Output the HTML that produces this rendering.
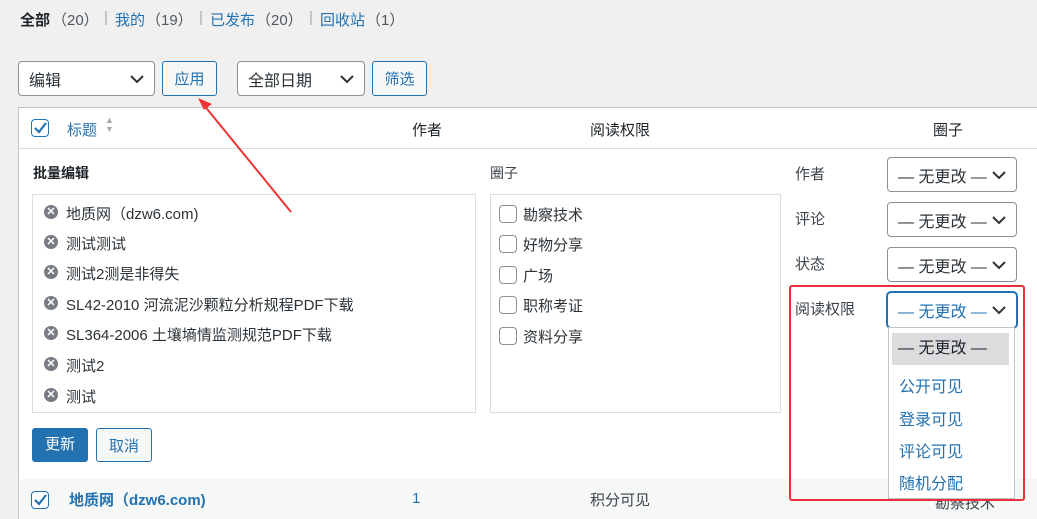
<!DOCTYPE html><html><head><meta charset="utf-8"><style>
*{box-sizing:border-box;margin:0;padding:0}
body{width:1037px;height:509px;overflow:hidden;background:#f0f0f1;font-family:"Liberation Sans","Noto Sans CJK SC",sans-serif;font-size:15px;color:#3c434a;position:relative}
.a{position:absolute;white-space:nowrap}
.link{color:#2271b1}
.sel{position:absolute;background:#fff;border:1px solid #8c8f94;border-radius:4px;color:#2c3338;font-size:16px;padding-left:10px;display:flex;align-items:center}
.sel svg{position:absolute;right:10px;top:50%;margin-top:-4px}
.btn{position:absolute;border:1px solid #2271b1;background:#f6f7f7;color:#2271b1;border-radius:3px;font-size:15px;display:flex;align-items:center;justify-content:center}
.cb{position:absolute;width:18px;height:18px;border:1px solid #8c8f94;border-radius:4px;background:#fff}
.x{position:absolute;width:14px;height:14px;border-radius:50%;background:#787c82;color:#fff;font-size:11px;line-height:14px;text-align:center;font-weight:bold}
.n{top:9px;font-size:15px;color:#50575e}
</style></head><body>
<div class="a n" style="left:20px;color:#1d2327;font-weight:bold">全部</div>
<div class="a n" style="left:52px">（20）</div>
<div class="a n" style="left:104px;color:#a7aaad">|</div>
<div class="a n link" style="left:115px;color:#2271b1">我的</div>
<div class="a n" style="left:146px">（19）</div>
<div class="a n" style="left:199px;color:#a7aaad">|</div>
<div class="a n" style="left:210px;color:#2271b1">已发布</div>
<div class="a n" style="left:256px">（20）</div>
<div class="a n" style="left:309px;color:#a7aaad">|</div>
<div class="a n" style="left:320px;color:#2271b1">回收站</div>
<div class="a n" style="left:366px">（1）</div>

<div class="sel" style="left:18px;top:61px;width:137px;height:35px">编辑<svg width="14" height="9"><path d="M1 1l6 6 6-6" stroke="#2c3338" stroke-width="2" fill="none"/></svg></div>
<div class="btn" style="left:162px;top:61px;width:55px;height:35px">应用</div>
<div class="sel" style="left:237px;top:61px;width:128px;height:35px">全部日期<svg width="14" height="9"><path d="M1 1l6 6 6-6" stroke="#2c3338" stroke-width="2" fill="none"/></svg></div>
<div class="btn" style="left:372px;top:61px;width:55px;height:35px">筛选</div>

<div class="a" style="left:18px;top:107px;width:1030px;height:42px;background:#fff;border:1px solid #c3c4c7"></div>
<div class="cb" style="left:31px;top:119px;border-color:#2271b1"><svg width="16" height="16" style="position:absolute;left:0;top:0"><path d="M3 8l4 4 7-9" stroke="#2271b1" stroke-width="2.2" fill="none"/></svg></div>
<div class="a link" style="left:67px;top:119px">标题</div>
<div class="a" style="left:105px;top:116px;color:#a7aaad;font-size:9px;line-height:9px">▲<br>▼</div>
<div class="a" style="left:412px;top:119px;color:#1d2327">作者</div>
<div class="a" style="left:590px;top:119px;color:#1d2327">阅读权限</div>
<div class="a" style="left:933px;top:119px;color:#1d2327">圈子</div>

<div class="a" style="left:18px;top:148px;width:1030px;height:331px;background:#fff;border-left:1px solid #c3c4c7;border-top:1px solid #dcdcde"></div>
<div class="a" style="left:33px;top:163px;font-weight:bold;font-size:14px;color:#1d2327">批量编辑</div>
<div class="a" style="left:490px;top:163px;font-size:14px">圈子</div>
<div class="a" style="left:32px;top:194px;width:444px;height:219px;border:1px solid #dcdcde"></div>
<div class="a" style="left:490px;top:194px;width:291px;height:219px;border:1px solid #dcdcde"></div>
<div class="x" style="left:44px;top:205px">✕</div><div class="a" style="left:66px;top:203px;color:#2c3338">地质网（dzw6.com)</div>
<div class="x" style="left:44px;top:235px">✕</div><div class="a" style="left:66px;top:233px;color:#2c3338">测试测试</div>
<div class="x" style="left:44px;top:265px">✕</div><div class="a" style="left:66px;top:263px;color:#2c3338">测试2测是非得失</div>
<div class="x" style="left:44px;top:296px">✕</div><div class="a" style="left:66px;top:294px;color:#2c3338">SL42-2010 河流泥沙颗粒分析规程PDF下载</div>
<div class="x" style="left:44px;top:326px">✕</div><div class="a" style="left:66px;top:324px;color:#2c3338">SL364-2006 土壤墒情监测规范PDF下载</div>
<div class="x" style="left:44px;top:357px">✕</div><div class="a" style="left:66px;top:355px;color:#2c3338">测试2</div>
<div class="x" style="left:44px;top:388px">✕</div><div class="a" style="left:66px;top:386px;color:#2c3338">测试</div>

<div class="cb" style="left:499px;top:205px"></div><div class="a" style="left:523px;top:204px;color:#2c3338">勘察技术</div>
<div class="cb" style="left:499px;top:235px"></div><div class="a" style="left:523px;top:234px;color:#2c3338">好物分享</div>
<div class="cb" style="left:499px;top:266px"></div><div class="a" style="left:523px;top:265px;color:#2c3338">广场</div>
<div class="cb" style="left:499px;top:296px"></div><div class="a" style="left:523px;top:295px;color:#2c3338">职称考证</div>
<div class="cb" style="left:499px;top:327px"></div><div class="a" style="left:523px;top:326px;color:#2c3338">资料分享</div>

<div class="a" style="left:795px;top:163px">作者</div>
<div class="a" style="left:795px;top:208px">评论</div>
<div class="a" style="left:795px;top:253px">状态</div>
<div class="a" style="left:795px;top:298px">阅读权限</div>
<div class="sel" style="left:887px;top:157px;width:130px;height:35px">— 无更改 —<svg width="14" height="9"><path d="M1 1l6 6 6-6" stroke="#2c3338" stroke-width="2" fill="none"/></svg></div>
<div class="sel" style="left:887px;top:202px;width:130px;height:35px">— 无更改 —<svg width="14" height="9"><path d="M1 1l6 6 6-6" stroke="#2c3338" stroke-width="2" fill="none"/></svg></div>
<div class="sel" style="left:887px;top:247px;width:130px;height:35px">— 无更改 —<svg width="14" height="9"><path d="M1 1l6 6 6-6" stroke="#2c3338" stroke-width="2" fill="none"/></svg></div>
<div class="sel" style="left:887px;top:292px;width:130px;height:36px;border-color:#2271b1;color:#2271b1;box-shadow:0 0 0 1px #2271b1">— 无更改 —<svg width="14" height="9"><path d="M1 1l6 6 6-6" stroke="#2c3338" stroke-width="2" fill="none"/></svg></div>

<div class="a" style="left:32px;top:428px;width:56px;height:34px;background:#2271b1;border-radius:3px;color:#fff;text-align:center;line-height:34px">更新</div>
<div class="btn" style="left:96px;top:428px;width:56px;height:34px">取消</div>

<div class="a" style="left:18px;top:479px;width:1030px;height:40px;background:#f6f7f7;border-left:1px solid #c3c4c7"></div>
<div class="cb" style="left:31px;top:491px;border-color:#2271b1"><svg width="16" height="16" style="position:absolute;left:0;top:0"><path d="M3 8l4 4 7-9" stroke="#2271b1" stroke-width="2.2" fill="none"/></svg></div>
<div class="a link" style="left:69px;top:489px;font-weight:bold">地质网（dzw6.com)</div>
<div class="a link" style="left:412px;top:490px">1</div>
<div class="a" style="left:590px;top:489px">积分可见</div>
<div class="a" style="left:935px;top:492px;color:#3c434a">勘察技术</div>

<div class="a" style="left:888px;top:327px;width:127px;height:172px;background:#fff;border:1px solid #c3c4c7;font-size:16px">
<div style="position:absolute;left:3px;top:5px;width:117px;height:32px;background:#dcdcde;color:#1d2327;padding-left:6px;line-height:32px">— 无更改 —</div>
<div style="position:absolute;left:10px;top:45px;color:#2271b1">公开可见</div>
<div style="position:absolute;left:10px;top:78px;color:#2271b1">登录可见</div>
<div style="position:absolute;left:10px;top:110px;color:#2271b1">评论可见</div>
<div style="position:absolute;left:10px;top:142px;color:#2271b1">随机分配</div>
</div>
<div class="a" style="left:789px;top:285px;width:236px;height:216px;border:2px solid #e8303a;border-radius:3px"></div>

<svg class="a" style="left:0;top:0" width="1037" height="509"><path d="M291 212L203 104" stroke="#e33" stroke-width="2"/><path d="M198 98l14 6-8 6z" fill="#e33"/></svg>
</body></html>
